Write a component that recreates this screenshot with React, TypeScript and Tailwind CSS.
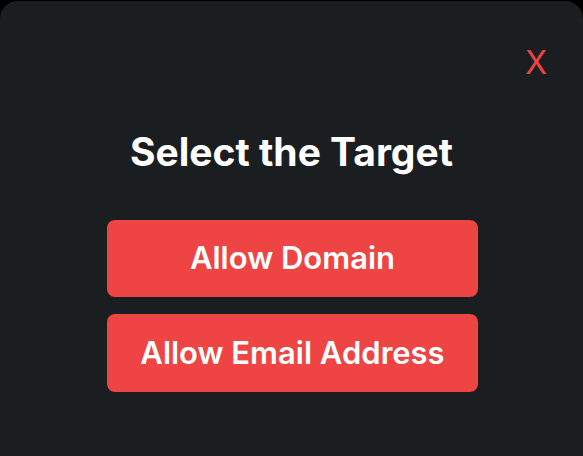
import React from 'react';

// Target selection dialog
export default function App() {
  return (
    <div className="w-[583px] h-[456px] bg-black pt-[1px] overflow-hidden" style={{ fontFamily: 'Inter, "Noto Sans", sans-serif' }}>
      <div className="h-full bg-[#1b1e21] rounded-t-[18px] flex flex-col">
        {/* Close */}
        <div className="flex justify-end pr-[36px] pt-[42px]">
          <button className="text-[#ef4444] text-[32px] leading-[40px] font-normal">X</button>
        </div>

        <h1 className="mt-[45px] text-center text-white text-[39px] leading-[48px] font-bold">
          Select the Target
        </h1>

        <div className="mt-[44px] pl-[2px] flex flex-col items-center gap-[17px]">
          <button className="w-[371px] h-[77px] rounded-[8px] bg-[#ef4444] text-white text-[31px] font-semibold">
            Allow Domain
          </button>
          <button className="w-[371px] h-[78px] rounded-[8px] bg-[#ef4444] text-white text-[31px] font-semibold">
            Allow Email Address
          </button>
        </div>
      </div>
    </div>
  );
}
